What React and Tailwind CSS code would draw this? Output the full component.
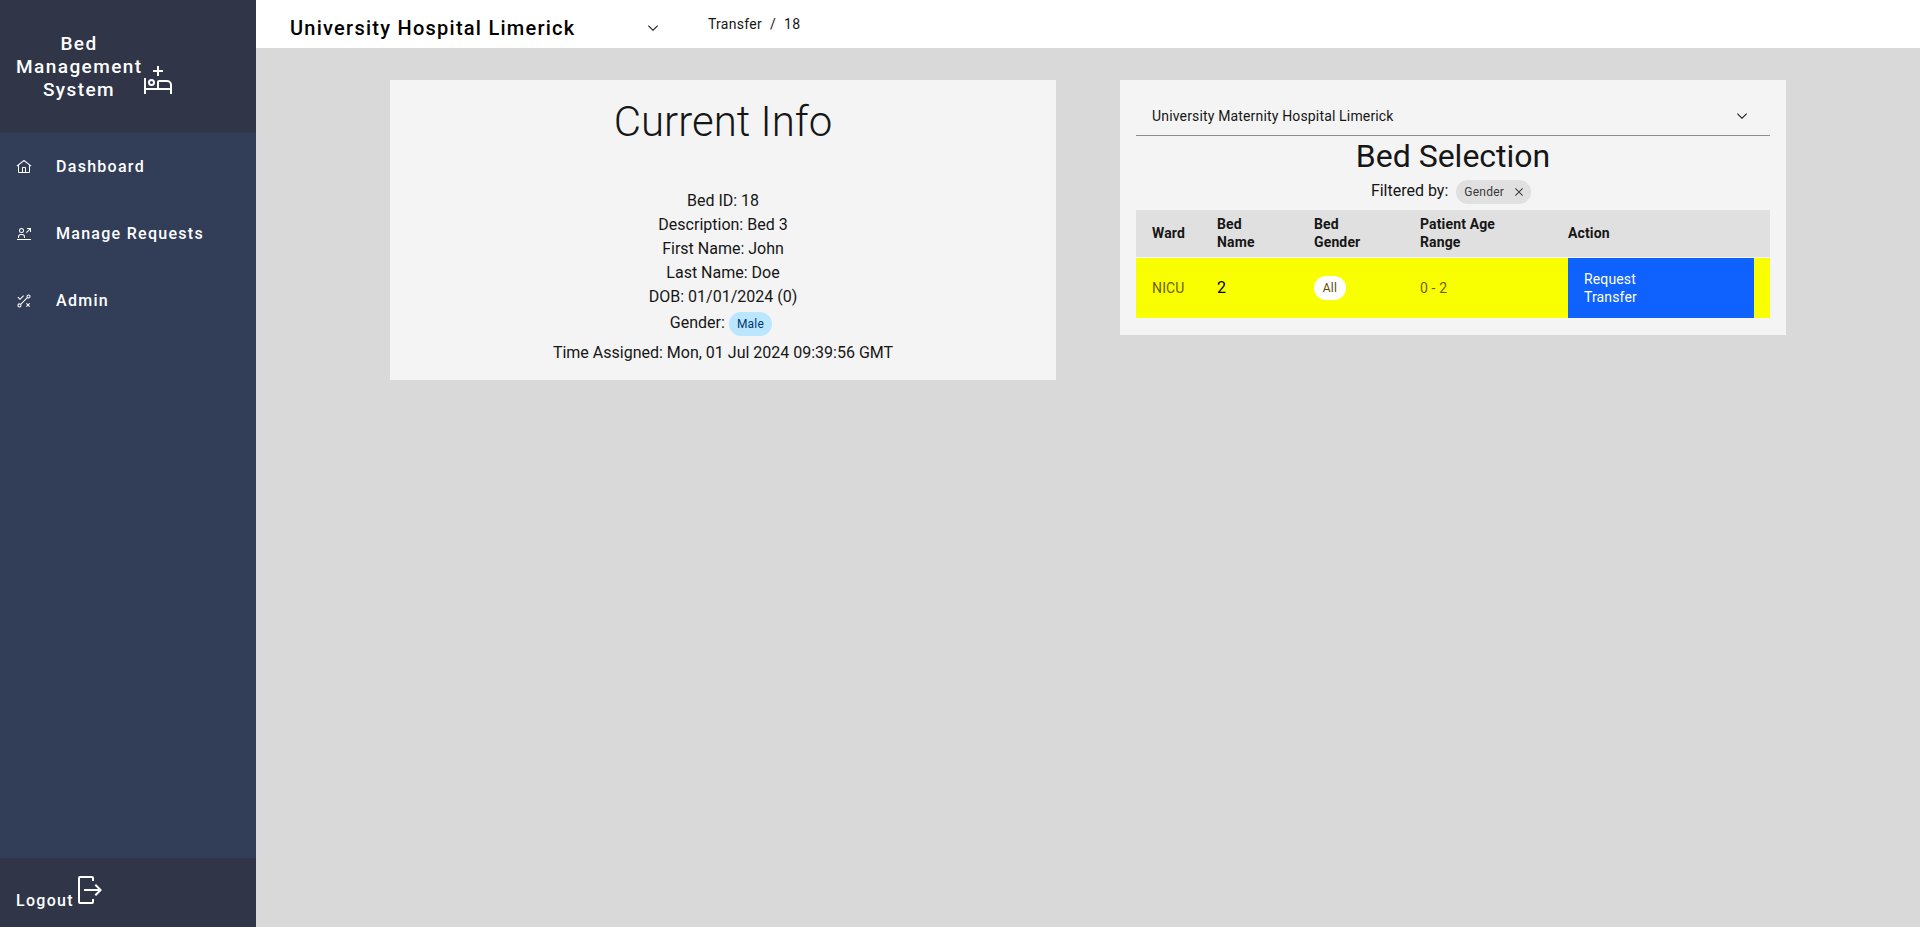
import React from "react";

const chevron = "M8 11L3 6 3.7 5.3 8 9.6 12.3 5.3 13 6z";

function Icon({ size = "size-4", box = "0 0 32 32", children }) {
  return (
    <svg viewBox={box} fill="currentColor" aria-hidden="true" className={`${size} shrink-0`}>
      {children}
    </svg>
  );
}

function HospitalBedIcon() {
  return (
    <Icon size="size-8">
      <path d="M25 16H17a2 2 0 0 0-2 2v6H4V14H2v16h2v-4h24v4h2v-9a5 5 0 0 0-5-5Zm3 8H17v-6h8a3 3 0 0 1 3 3Z" />
      <path d="M9.5 17A1.5 1.5 0 1 1 8 18.5A1.5 1.5 0 0 1 9.5 17m0-2A3.5 3.5 0 1 0 13 18.5A3.5 3.5 0 0 0 9.5 15Z" />
      <path d="M21 6H17V2H15V6H11V8H15V12H17V8H21Z" />
    </Icon>
  );
}

function HomeIcon() {
  return (
    <Icon>
      <path d="M16.6123,2.2138a1.01,1.01,0,0,0-1.2427,0L1,13.4194l1.2427,1.5717L4,13.6208V26a2.0041,2.0041,0,0,0,2,2H26a2.0037,2.0037,0,0,0,2-2V13.63L29.7573,15,31,13.4282ZM18,26H14V18h4Zm2,0V18a2.0023,2.0023,0,0,0-2-2H14a2.002,2.002,0,0,0-2,2v8H6V12.0615l10-7.79,10,7.8005V26Z" />
    </Icon>
  );
}

function RequestsIcon() {
  return (
    <Icon>
      <path d="M2 26H30V28H2Z" />
      <path d="M22 4V6H26.586L20 12.586 21.414 14 28 7.414V12H30V4Z" />
      <path d="M11 6a3 3 0 1 1-3 3 3 3 0 0 1 3-3m0-2a5 5 0 1 0 5 5 5 5 0 0 0-5-5Z" />
      <path d="M4 24v-2a6 6 0 0 1 6-6h2a6 6 0 0 1 6 6v2h-2v-2a4 4 0 0 0-4-4h-2a4 4 0 0 0-4 4v2Z" />
    </Icon>
  );
}

function RulesIcon() {
  return (
    <Icon>
      <path d="M28 21.41 26.59 20 24 22.59 21.41 20 20 21.41 22.59 24 20 26.59 21.41 28 24 25.41 26.59 28 28 26.59 25.41 24Z" />
      <path d="M25 3a4 4 0 0 0-4 4 3.9 3.9 0 0 0 .57 2L9 21.57A4 4 0 1 0 11 25a3.9 3.9 0 0 0-.57-2L23 10.43A4 4 0 1 0 25 3ZM7 27a2 2 0 1 1 2-2 2 2 0 0 1-2 2ZM25 9a2 2 0 1 1 2-2 2 2 0 0 1-2 2Z" />
      <path d="M8 11.18 4.41 7.59 3 9 8 14 16 6 14.59 4.59Z" />
    </Icon>
  );
}

function LogoutIcon() {
  return (
    <Icon size="size-8">
      <path d="M6 30H18a2 2 0 0 0 2-2V25H18v3H6V4H18V7h2V4a2 2 0 0 0-2-2H6A2 2 0 0 0 4 4V28A2 2 0 0 0 6 30Z" />
      <path d="M20.586 20.586 24.172 17H10V15H24.172L20.586 11.414 22 10 28 16 22 22Z" />
    </Icon>
  );
}

const links = [
  ["Dashboard", HomeIcon],
  ["Manage Requests", RequestsIcon],
  ["Admin", RulesIcon],
];

function Sidebar() {
  return (
    <aside className="flex w-64 shrink-0 flex-col bg-[#323e58] font-medium text-white">
      <div className="flex items-end bg-[#303548] px-4 py-8">
        <div className="w-[126px] text-center text-[19px] leading-[23px] tracking-[0.075em]">Bed Management System</div>
        <div className="pb-[5px]">
          <HospitalBedIcon />
        </div>
      </div>
      <nav className="flex-1">
        {links.map(([label, Glyph]) => (
          <a key={label} href="#" className="flex h-[67px] items-center gap-6 px-4 text-base tracking-[0.08em]">
            <Glyph />
            {label}
          </a>
        ))}
      </nav>
      <button type="button" className="flex items-start bg-[#303548] p-4 text-base tracking-[0.08em]">
        <span className="pt-[17px] leading-5">Logout</span>
        <LogoutIcon />
      </button>
    </aside>
  );
}

function TopBar() {
  return (
    <header className="flex h-12 shrink-0 bg-white">
      <div className="relative ml-[18px] flex w-[400px] items-center">
        <select
          aria-label="Hospital"
          className="h-12 w-full appearance-none bg-transparent pt-2 pr-12 pl-4 text-xl font-medium tracking-[0.0625em] text-black"
        >
          <option>University Hospital Limerick</option>
        </select>
        <div className="pointer-events-none absolute top-5 right-[13px]">
          <Icon box="0 0 16 16">
            <path d={chevron} />
          </Icon>
        </div>
      </div>
      <nav aria-label="Breadcrumb" className="ml-[34px] flex gap-2 pt-[15px] text-sm leading-[18px] tracking-[0.02em]">
        <a href="#">Transfer</a>
        <span>/</span>
        <span>18</span>
      </nav>
    </header>
  );
}

const info = ["Bed ID: 18", "Description: Bed 3", "First Name: John", "Last Name: Doe", "DOB: 01/01/2024 (0)"];

function CurrentInfo() {
  return (
    <section className="bg-[#f4f4f4] px-4 pt-4 pb-[15px] text-center">
      <h1 className="text-[42px] leading-[52px] font-light">Current Info</h1>
      <div className="pt-[41px] leading-6">
        {info.map((line) => (
          <p key={line}>{line}</p>
        ))}
        <p className="flex h-8 items-start justify-center gap-1">
          <span className="pt-0.5">Gender:</span>
          <span className="mt-[3px] mr-1 rounded-full bg-[#bae6ff] px-2 text-xs leading-6 tracking-[0.02em] text-[#003a6d]">
            Male
          </span>
        </p>
        <p>Time Assigned: Mon, 01 Jul 2024 09:39:56 GMT</p>
      </div>
    </section>
  );
}

function BedSelection() {
  return (
    <section className="bg-[#f4f4f4] px-4 pt-4 pb-[17px]">
      <div className="relative border-b border-[#8d8d8d]">
        <select
          aria-label="Transfer hospital"
          className="h-[39px] w-full appearance-none bg-transparent pr-12 pl-4 text-sm tracking-[0.16px]"
        >
          <option>University Maternity Hospital Limerick</option>
        </select>
        <div className="pointer-events-none absolute top-3 right-5">
          <Icon box="0 0 16 16">
            <path d={chevron} />
          </Icon>
        </div>
      </div>
      <h2 className="text-center text-[32px] leading-10">Bed Selection</h2>
      <div className="flex h-[34px] justify-center gap-2">
        <span className="pt-[3px] leading-6">Filtered by:</span>
        <span className="mt-1 mr-1 flex h-6 items-center rounded-full bg-[#e0e0e0] pl-2 text-xs tracking-[0.02em] text-[#393939]">
          Gender
          <button type="button" aria-label="Clear gender filter" className="ml-[3px] flex w-6 justify-center">
            <Icon>
              <path d="M24 9.4 22.6 8 16 14.6 9.4 8 8 9.4 14.6 16 8 22.6 9.4 24 16 17.4 22.6 24 24 22.6 17.4 16Z" />
            </Icon>
          </button>
        </span>
      </div>
      <table className="w-full text-left text-sm leading-[18px] tracking-[0.01em]">
        <thead className="bg-[#e0e0e0]">
          <tr className="h-[47px] border-b border-[#f4f4f4]">
            <th className="w-[65px] pl-4 font-bold">Ward</th>
            <th className="w-[97px] pl-4 font-bold">Bed<br />Name</th>
            <th className="w-[106px] pl-4 font-bold">Bed<br />Gender</th>
            <th className="w-[164px] pl-4 font-bold">Patient Age<br />Range</th>
            <th className="font-bold">Action</th>
          </tr>
        </thead>
        <tbody>
          <tr className="h-[60px] bg-[#f9ff00] text-[#6b5f00]">
            <td className="pl-4">NICU</td>
            <td className="pl-4 text-base text-black">2</td>
            <td className="pl-4">
              <span className="inline-block min-w-8 rounded-full bg-white px-2 text-center text-xs leading-6 tracking-[0.02em] text-[#5c4a00]">
                All
              </span>
            </td>
            <td className="pl-4">0 - 2</td>
            <td className="pr-4">
              <button type="button" className="block h-[60px] w-full bg-[#0f62fe] px-4 text-left tracking-[0.01em] text-white">
                Request<br />Transfer
              </button>
            </td>
          </tr>
        </tbody>
      </table>
    </section>
  );
}

export default function App() {
  return (
    <div className="flex min-h-screen bg-[#d9d9d9] text-[#161616] [font-family:Roboto,sans-serif]">
      <Sidebar />
      <div className="flex min-w-0 flex-1 flex-col">
        <TopBar />
        <main className="mx-auto grid w-full max-w-[1396px] grid-cols-2 items-start gap-16 pt-8">
          <CurrentInfo />
          <BedSelection />
        </main>
      </div>
    </div>
  );
}
